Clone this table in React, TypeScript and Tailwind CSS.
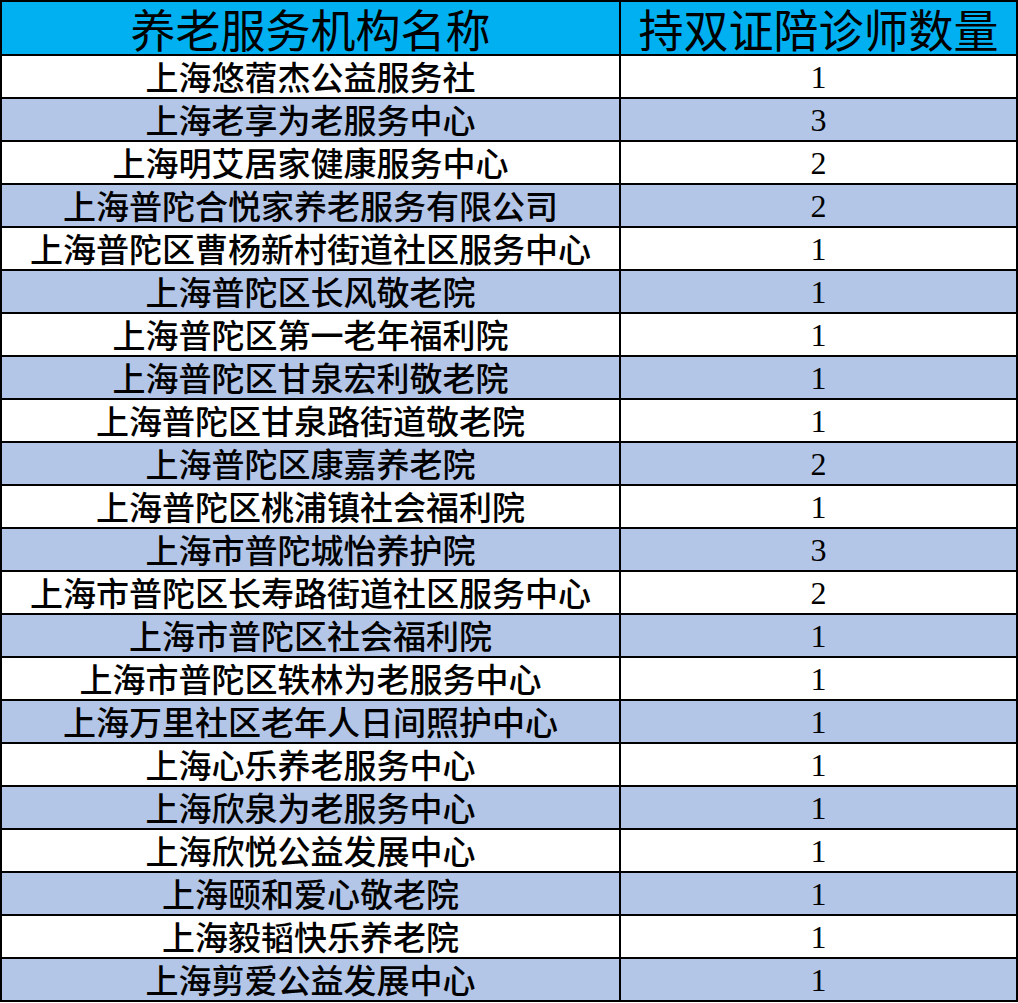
const rows: [string, number][] = [
  ["上海悠蓿杰公益服务社", 1],
  ["上海老享为老服务中心", 3],
  ["上海明艾居家健康服务中心", 2],
  ["上海普陀合悦家养老服务有限公司", 2],
  ["上海普陀区曹杨新村街道社区服务中心", 1],
  ["上海普陀区长风敬老院", 1],
  ["上海普陀区第一老年福利院", 1],
  ["上海普陀区甘泉宏利敬老院", 1],
  ["上海普陀区甘泉路街道敬老院", 1],
  ["上海普陀区康嘉养老院", 2],
  ["上海普陀区桃浦镇社会福利院", 1],
  ["上海市普陀城怡养护院", 3],
  ["上海市普陀区长寿路街道社区服务中心", 2],
  ["上海市普陀区社会福利院", 1],
  ["上海市普陀区轶林为老服务中心", 1],
  ["上海万里社区老年人日间照护中心", 1],
  ["上海心乐养老服务中心", 1],
  ["上海欣泉为老服务中心", 1],
  ["上海欣悦公益发展中心", 1],
  ["上海颐和爱心敬老院", 1],
  ["上海毅韬快乐养老院", 1],
  ["上海剪爱公益发展中心", 1],
]

const cjk = "font-['Noto_Sans_CJK_SC',sans-serif]"

export default function App() {
  return (
    <div className="h-[1003px] w-[1018px] overflow-hidden bg-white">
      <div className="w-[1018px] border-x-2 border-t-2 border-black text-black">
        {/* header */}
        <div className="grid h-[54px] grid-cols-[619px_1fr] border-b-2 border-black bg-[#00b0f0]">
          <div
            className={`flex items-center justify-center border-r-2 border-black text-[45px] leading-none ${cjk}`}
          >
            养老服务机构名称
          </div>
          <div className={`flex items-center justify-center text-[45px] leading-none ${cjk}`}>
            持双证陪诊师数量
          </div>
        </div>

        {rows.map(([name, count], i) => (
          <div
            key={name}
            className={`grid h-[43px] grid-cols-[619px_1fr] border-b-2 border-black ${
              i % 2 === 1 ? "bg-[#b4c6e7]" : "bg-white"
            }`}
          >
            <div
              className={`flex items-center justify-center border-r-2 border-black text-[33px] leading-none font-medium ${cjk}`}
            >
              {name}
            </div>
            <div className="flex items-center justify-center font-['Liberation_Serif',serif] text-[32px] leading-none">
              {count}
            </div>
          </div>
        ))}
      </div>
    </div>
  )
}
